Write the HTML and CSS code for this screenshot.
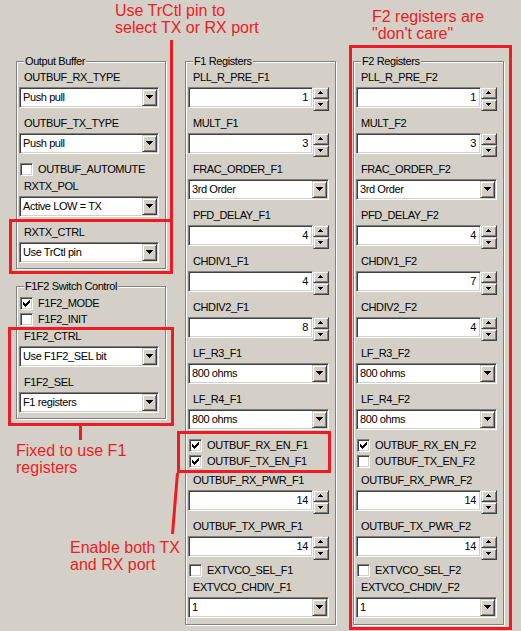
FILE: index.html
```
<!DOCTYPE html>
<html lang="en">
<head>
    <meta charset="UTF-8">
    <title>Output buffer and F1/F2 registers</title>
    <link rel="stylesheet" href="styles.css">
</head>
<body>
    <div class="dialog">
        <!-- left column -->
        <div class="col col-left">
            <fieldset class="group">
                <legend>Output Buffer</legend>
                <div class="field">
                    <div class="label">OUTBUF_RX_TYPE</div>
                    <div class="combo"><span>Push pull</span><i class="drop"></i></div>
                </div>
                <div class="field">
                    <div class="label">OUTBUF_TX_TYPE</div>
                    <div class="combo"><span>Push pull</span><i class="drop"></i></div>
                </div>
                <div class="check"><span class="box"></span>OUTBUF_AUTOMUTE</div>
                <div class="field">
                    <div class="label">RXTX_POL</div>
                    <div class="combo"><span>Active LOW = TX</span><i class="drop"></i></div>
                </div>
                <div class="field">
                    <div class="label">RXTX_CTRL</div>
                    <div class="combo"><span>Use TrCtl pin</span><i class="drop"></i></div>
                </div>
            </fieldset>

            <fieldset class="group">
                <legend>F1F2 Switch Control</legend>
                <div class="check"><span class="box"><svg viewBox="0 0 11 11" width="11" height="11"><path d="M8 2h1v1h-1zM7 3h2v1h-2zM2 4h1v1h-1zM6 4h3v1h-3zM2 5h2v1h-2zM5 5h3v1h-3zM2 6h5v1h-5zM3 7h3v1h-3zM4 8h1v1h-1z"/></svg></span>F1F2_MODE</div>
                <div class="check"><span class="box"></span>F1F2_INIT</div>
                <div class="field">
                    <div class="label">F1F2_CTRL</div>
                    <div class="combo"><span>Use F1F2_SEL bit</span><i class="drop"></i></div>
                </div>
                <div class="field">
                    <div class="label">F1F2_SEL</div>
                    <div class="combo"><span>F1 registers</span><i class="drop"></i></div>
                </div>
            </fieldset>
        </div>

        <!-- F1 registers -->
        <div class="col col-regs">
            <fieldset class="group">
                <legend>F1 Registers</legend>
                <div class="field">
                    <div class="label">PLL_R_PRE_F1</div>
                    <div class="spin"><span class="spin-edit">1</span><span class="spin-btns"><i class="up"></i><i class="down"></i></span></div>
                </div>
                <div class="field">
                    <div class="label">MULT_F1</div>
                    <div class="spin"><span class="spin-edit">3</span><span class="spin-btns"><i class="up"></i><i class="down"></i></span></div>
                </div>
                <div class="field">
                    <div class="label">FRAC_ORDER_F1</div>
                    <div class="combo"><span>3rd Order</span><i class="drop"></i></div>
                </div>
                <div class="field">
                    <div class="label">PFD_DELAY_F1</div>
                    <div class="spin"><span class="spin-edit">4</span><span class="spin-btns"><i class="up"></i><i class="down"></i></span></div>
                </div>
                <div class="field">
                    <div class="label">CHDIV1_F1</div>
                    <div class="spin"><span class="spin-edit">4</span><span class="spin-btns"><i class="up"></i><i class="down"></i></span></div>
                </div>
                <div class="field">
                    <div class="label">CHDIV2_F1</div>
                    <div class="spin"><span class="spin-edit">8</span><span class="spin-btns"><i class="up"></i><i class="down"></i></span></div>
                </div>
                <div class="field">
                    <div class="label">LF_R3_F1</div>
                    <div class="combo"><span>800 ohms</span><i class="drop"></i></div>
                </div>
                <div class="field">
                    <div class="label">LF_R4_F1</div>
                    <div class="combo"><span>800 ohms</span><i class="drop"></i></div>
                </div>
                <div class="check"><span class="box"><svg viewBox="0 0 11 11" width="11" height="11"><path d="M8 2h1v1h-1zM7 3h2v1h-2zM2 4h1v1h-1zM6 4h3v1h-3zM2 5h2v1h-2zM5 5h3v1h-3zM2 6h5v1h-5zM3 7h3v1h-3zM4 8h1v1h-1z"/></svg></span>OUTBUF_RX_EN_F1</div>
                <div class="check"><span class="box"><svg viewBox="0 0 11 11" width="11" height="11"><path d="M8 2h1v1h-1zM7 3h2v1h-2zM2 4h1v1h-1zM6 4h3v1h-3zM2 5h2v1h-2zM5 5h3v1h-3zM2 6h5v1h-5zM3 7h3v1h-3zM4 8h1v1h-1z"/></svg></span>OUTBUF_TX_EN_F1</div>
                <div class="field field-loose">
                    <div class="label">OUTBUF_RX_PWR_F1</div>
                    <div class="spin"><span class="spin-edit">14</span><span class="spin-btns"><i class="up"></i><i class="down"></i></span></div>
                </div>
                <div class="field">
                    <div class="label">OUTBUF_TX_PWR_F1</div>
                    <div class="spin"><span class="spin-edit">14</span><span class="spin-btns"><i class="up"></i><i class="down"></i></span></div>
                </div>
                <div class="check check-after-spin"><span class="box"></span>EXTVCO_SEL_F1</div>
                <div class="field">
                    <div class="label">EXTVCO_CHDIV_F1</div>
                    <div class="combo"><span>1</span><i class="drop"></i></div>
                </div>
            </fieldset>
        </div>

        <!-- F2 registers -->
        <div class="col col-regs">
            <fieldset class="group">
                <legend>F2 Registers</legend>
                <div class="field">
                    <div class="label">PLL_R_PRE_F2</div>
                    <div class="spin"><span class="spin-edit">1</span><span class="spin-btns"><i class="up"></i><i class="down"></i></span></div>
                </div>
                <div class="field">
                    <div class="label">MULT_F2</div>
                    <div class="spin"><span class="spin-edit">3</span><span class="spin-btns"><i class="up"></i><i class="down"></i></span></div>
                </div>
                <div class="field">
                    <div class="label">FRAC_ORDER_F2</div>
                    <div class="combo"><span>3rd Order</span><i class="drop"></i></div>
                </div>
                <div class="field">
                    <div class="label">PFD_DELAY_F2</div>
                    <div class="spin"><span class="spin-edit">4</span><span class="spin-btns"><i class="up"></i><i class="down"></i></span></div>
                </div>
                <div class="field">
                    <div class="label">CHDIV1_F2</div>
                    <div class="spin"><span class="spin-edit">7</span><span class="spin-btns"><i class="up"></i><i class="down"></i></span></div>
                </div>
                <div class="field">
                    <div class="label">CHDIV2_F2</div>
                    <div class="spin"><span class="spin-edit">4</span><span class="spin-btns"><i class="up"></i><i class="down"></i></span></div>
                </div>
                <div class="field">
                    <div class="label">LF_R3_F2</div>
                    <div class="combo"><span>800 ohms</span><i class="drop"></i></div>
                </div>
                <div class="field">
                    <div class="label">LF_R4_F2</div>
                    <div class="combo"><span>800 ohms</span><i class="drop"></i></div>
                </div>
                <div class="check"><span class="box"><svg viewBox="0 0 11 11" width="11" height="11"><path d="M8 2h1v1h-1zM7 3h2v1h-2zM2 4h1v1h-1zM6 4h3v1h-3zM2 5h2v1h-2zM5 5h3v1h-3zM2 6h5v1h-5zM3 7h3v1h-3zM4 8h1v1h-1z"/></svg></span>OUTBUF_RX_EN_F2</div>
                <div class="check"><span class="box"></span>OUTBUF_TX_EN_F2</div>
                <div class="field field-loose">
                    <div class="label">OUTBUF_RX_PWR_F2</div>
                    <div class="spin"><span class="spin-edit">14</span><span class="spin-btns"><i class="up"></i><i class="down"></i></span></div>
                </div>
                <div class="field">
                    <div class="label">OUTBUF_TX_PWR_F2</div>
                    <div class="spin"><span class="spin-edit">14</span><span class="spin-btns"><i class="up"></i><i class="down"></i></span></div>
                </div>
                <div class="check check-after-spin"><span class="box"></span>EXTVCO_SEL_F2</div>
                <div class="field">
                    <div class="label">EXTVCO_CHDIV_F2</div>
                    <div class="combo"><span>1</span><i class="drop"></i></div>
                </div>
            </fieldset>
        </div>
    </div>

    <!-- red markup drawn over the dialog -->
    <svg class="marks" width="521" height="631" viewBox="0 0 521 631">
        <g fill="none" stroke="#ed1c24" stroke-width="3" shape-rendering="crispEdges">
            <rect x="10.5" y="220.5" width="161" height="52"/>
            <rect x="9.5" y="328.5" width="163" height="96"/>
            <rect x="350.5" y="46.5" width="160" height="582"/>
            <rect x="178.5" y="432.5" width="151" height="39"/>
            <line x1="171.5" y1="40" x2="171.5" y2="220"/>
            <line x1="80.5" y1="426" x2="80.5" y2="440"/>
        </g>
        <line x1="177.5" y1="473" x2="172.5" y2="534" stroke="#ed1c24" stroke-width="3"/>
    </svg>

    <div class="note note-trctl">Use TrCtl pin to<br>select TX or RX port</div>
    <div class="note note-f2">F2 registers are<br>"don't care"</div>
    <div class="note note-fixed">Fixed to use F1<br>registers</div>
    <div class="note note-enable">Enable both TX<br>and RX port</div>
</body>
</html>
```

FILE: styles.css
```
* {
    margin: 0;
    padding: 0;
    box-sizing: border-box;
}

body {
    position: relative;
    width: 521px;
    height: 631px;
    overflow: hidden;
    background: #d4d0c8;
    color: #000;
    font-family: "Liberation Sans", Arial, sans-serif;
    font-size: 11px;
    line-height: 13px;
    letter-spacing: -0.4px;
}

/* dialog columns */
.dialog {
    display: flex;
    align-items: flex-start;
    padding: 55px 0 0 16px;
}

.col-left {
    width: 150px;
    margin-right: 19px;
    display: flex;
    flex-direction: column;
    gap: 11px;
}

.col-regs {
    width: 151px;
}

.col-regs + .col-regs {
    margin-left: 17px;
}

/* etched group box */
.group {
    min-width: 0;
    border: 1px solid #808080;
    box-shadow: inset 1px 1px 0 #fff, 1px 1px 0 #fff;
    padding: 3px 0 5px 2px;
}

.col-regs .group {
    padding-bottom: 6px;
}

.group legend {
    margin-left: 5px;
    padding: 0 1px;
    background: #d4d0c8;
    line-height: 13px;
}

/* spacing between rows */
.field,
.check {
    margin-top: 9px;
}

legend + .field {
    margin-top: 0;
}

legend + .check {
    margin-top: 1px;
}

.check + .check {
    margin-top: 3px;
}

.check + .field {
    margin-top: 4px;
}

.check + .field-loose {
    margin-top: 6px;
}

.check-after-spin {
    margin-top: 7px;
}

.label {
    height: 13px;
    margin-bottom: 3px;
    padding-left: 5px;
    white-space: nowrap;
}

/* sunken and raised 3d edges */
.combo,
.spin-edit,
.box {
    background: #fff;
    border: 1px solid;
    border-color: #808080 #fff #fff #808080;
    box-shadow: inset 1px 1px 0 #404040, inset -1px -1px 0 #d4d0c8;
}

.drop,
.spin-btns i {
    display: block;
    background: #d4d0c8;
    border: 1px solid;
    border-color: #d4d0c8 #404040 #404040 #d4d0c8;
    box-shadow: inset 1px 1px 0 #fff, inset -1px -1px 0 #808080;
}

/* drop down list */
.combo {
    display: flex;
    align-items: center;
    width: 141px;
    height: 21px;
    padding-left: 3px;
    white-space: nowrap;
}

.col-left .combo {
    width: 140px;
}

.drop {
    width: 15px;
    height: 17px;
    margin-left: auto;
    margin-right: 1px;
}

.drop::after {
    content: '';
    display: block;
    width: 7px;
    height: 4px;
    margin: 5px 0 0 3px;
    background: #000;
    clip-path: polygon(0 0, 7px 0, 7px 1px, 6px 1px, 6px 2px, 5px 2px, 5px 3px, 4px 3px, 4px 4px, 3px 4px, 3px 3px, 2px 3px, 2px 2px, 1px 2px, 1px 1px, 0 1px);
}

/* number edit with up/down buttons */
.spin {
    display: flex;
    align-items: flex-start;
    height: 21px;
}

.spin-edit {
    width: 125px;
    height: 21px;
    padding-right: 4px;
    text-align: right;
    line-height: 19px;
}

.spin-btns {
    display: flex;
    flex-direction: column;
    width: 16px;
}

.spin-btns i {
    height: 12px;
}

.spin-btns i::after {
    content: '';
    display: block;
    width: 5px;
    height: 3px;
    margin: 3px 0 0 4px;
    background: #000;
}

.spin-btns .up::after {
    clip-path: polygon(2px 0, 3px 0, 3px 1px, 4px 1px, 4px 2px, 5px 2px, 5px 3px, 0 3px, 0 2px, 1px 2px, 1px 1px, 2px 1px);
}

.spin-btns .down::after {
    clip-path: polygon(0 0, 5px 0, 5px 1px, 4px 1px, 4px 2px, 3px 2px, 3px 3px, 2px 3px, 2px 2px, 1px 2px, 1px 1px, 0 1px);
}

/* check box */
.check {
    display: flex;
    align-items: center;
    gap: 5px;
    height: 13px;
    padding-left: 1px;
    white-space: nowrap;
}

.box {
    width: 13px;
    height: 13px;
    flex-shrink: 0;
}

.box svg {
    display: block;
    fill: #000;
    shape-rendering: crispEdges;
}

/* annotations */
.marks {
    position: absolute;
    left: 0;
    top: 0;
    pointer-events: none;
}

.note {
    position: absolute;
    color: #ed1c24;
    font-size: 16px;
    line-height: 17px;
    letter-spacing: 0;
    white-space: nowrap;
}

.note-trctl {
    left: 115px;
    top: 2px;
}

.note-f2 {
    left: 372px;
    top: 8px;
}

.note-fixed {
    left: 16px;
    top: 442px;
}

.note-enable {
    left: 70px;
    top: 539px;
}
```
